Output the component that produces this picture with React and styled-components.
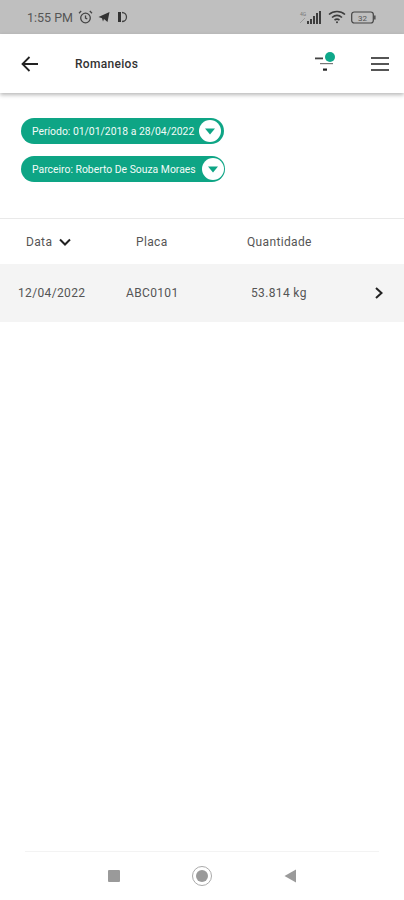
import React from 'react';
import styled, { createGlobalStyle } from 'styled-components';

const GlobalStyle = createGlobalStyle`
  html, body {
    margin: 0;
    padding: 0;
    background: #fff;
    font-family: Roboto, "Liberation Sans", sans-serif;
  }
`;

const Page = styled.div`
  width: 404px;
  height: 900px;
  display: flex;
  flex-direction: column;
  background: #fff;
  overflow: hidden;
`;

const StatusBar = styled.div`
  height: 34px;
  flex: none;
  background: #bfbfbf;
  display: flex;
  align-items: center;
  justify-content: space-between;
  padding: 0 27px 0 27px;
  box-sizing: border-box;
  color: #4a4a4a;
`;

const StatusGroup = styled.div`
  display: flex;
  align-items: center;
  gap: ${(p) => p.$gap}px;
`;

const StatusTime = styled.span`
  font-size: 12.5px;
  color: #555;
`;

const MoonIcon = styled.svg`
  margin-left: 2px;
`;

const Header = styled.div`
  height: 59px;
  flex: none;
  background: #fff;
  display: flex;
  align-items: center;
  padding: 0 14px 0 20px;
  box-sizing: border-box;
  box-shadow: 0 2px 4px rgba(0, 0, 0, 0.28);
`;

const HeaderTitle = styled.div`
  margin-left: 35px;
  flex: 1;
  font-size: 12px;
  font-weight: 500;
  letter-spacing: 0.3px;
  color: #333;
`;

const FilterButton = styled.div`
  position: relative;
  width: 20px;
  height: 20px;
  margin-right: 35px;
`;

const Dot = styled.span`
  position: absolute;
  right: 0;
  top: -2px;
  width: 10px;
  height: 10px;
  border-radius: 50%;
  background: #0fa88a;
`;

const Filters = styled.div`
  display: flex;
  flex-direction: column;
  align-items: flex-start;
  gap: 12px;
  padding: 25px 0 0 21px;
  height: 126px;
  box-sizing: border-box;
  flex: none;
  border-bottom: 1px solid #e9e9e9;
`;

const Pill = styled.div`
  height: 26px;
  width: ${(p) => p.$width}px;
  box-sizing: border-box;
  border-radius: 13px;
  background: #0ea585;
  display: flex;
  align-items: center;
  justify-content: space-between;
  padding: 0 ${(p) => p.$pad}px 0 11px;
  color: #f2fbf8;
  font-size: 10.4px;
  white-space: nowrap;
`;

const PillArrow = styled.span`
  width: 22px;
  height: 22px;
  border-radius: 50%;
  background: #fff;
  display: flex;
  align-items: center;
  justify-content: center;
`;

const Columns = styled.div`
  display: grid;
  grid-template-columns: 110px 111px 1fr;
  height: 45px;
  align-items: center;
  flex: none;
  padding-left: 26px;
  font-size: 12px;
  letter-spacing: 0.35px;
  color: #555;
`;

const ColumnLabel = styled.div`
  display: flex;
  align-items: center;
  gap: 7px;
`;

const DataRow = styled.div`
  display: grid;
  grid-template-columns: 108px 125px 1fr 20px;
  height: 58px;
  align-items: center;
  flex: none;
  background: #f4f4f4;
  padding: 0 10px 0 18px;
  font-size: 12px;
  letter-spacing: 0.35px;
  color: #555;
`;

const Spacer = styled.div`
  flex: 1;
`;

const NavBar = styled.div`
  margin: 0 25px;
  height: 48px;
  flex: none;
  border-top: 1px solid #f3f3f3;
  display: flex;
  align-items: center;
  justify-content: space-between;
  padding: 0 83px;
`;

const NavSquare = styled.span`
  width: 12px;
  height: 12px;
  border-radius: 1px;
  background: #9a9a9a;
`;

const NavCircle = styled.span`
  width: 18px;
  height: 18px;
  border-radius: 50%;
  border: 1.5px solid #aaa;
  display: flex;
  align-items: center;
  justify-content: center;
  &::after {
    content: '';
    width: 12px;
    height: 12px;
    border-radius: 50%;
    background: #9a9a9a;
  }
`;

const Caret = () => (
  <svg width="12" height="8" viewBox="0 0 12 8">
    <path d="M1 1.5 L6 6.5 L11 1.5" fill="none" stroke="#222" strokeWidth="2" />
  </svg>
);

const PillCaret = () => (
  <svg width="12" height="7" viewBox="0 0 12 7">
    <path d="M1 0.5 H11 L6 6.5 Z" fill="#0ea585" />
  </svg>
);

const App = () => (
  <Page>
    <GlobalStyle />
    <StatusBar>
      <StatusGroup $gap={5}>
        <StatusTime>1:55 PM</StatusTime>
        <svg width="15" height="14" viewBox="0 0 15 14" fill="none" stroke="#444" strokeWidth="1.3">
          <circle cx="7.5" cy="8" r="4.8" />
          <path d="M7.5 5.5 V8 L9.3 9 M1 3.2 L3.2 1 M14 3.2 L11.8 1" />
        </svg>
        <svg width="12" height="10" viewBox="0 0 11 10">
          <path d="M0 5 L11 0 L9 10 L5.5 7 L4.5 9.5 L3.5 6.3 Z" fill="#333" />
        </svg>
        <MoonIcon width="12" height="12" viewBox="0 0 12 12">
          <path d="M1 1 H4 V11 H1 Z" fill="#333" />
          <path d="M5 1.5 A4.5 4.5 0 0 1 5 10.5" fill="none" stroke="#444" strokeWidth="1.3" />
        </MoonIcon>
      </StatusGroup>
      <StatusGroup $gap={5}>
        <svg width="24" height="15" viewBox="0 0 24 15">
          <text x="1" y="6" fontSize="5" fill="#777" fontFamily="Roboto, sans-serif">4G</text>
          <path d="M1 13 L6 8" stroke="#999" strokeWidth="1" />
          <path d="M8 11h2v3H8z M11 9h2v5h-2z M14 6h2v8h-2z M17 3h2v11h-2z M20 1h2v13h-2z" fill="#3d3d3d" />
        </svg>
        <svg width="18" height="14" viewBox="0 0 18 14" fill="none" stroke="#3d3d3d" strokeWidth="1.6">
          <path d="M1 4.5 C5.5 0.5 12.5 0.5 17 4.5" />
          <path d="M4 7.5 C7 5 11 5 14 7.5" />
          <path d="M6.5 10 C8 9 10 9 11.5 10" />
          <circle cx="9" cy="12.3" r="1" fill="#3d3d3d" stroke="none" />
        </svg>
        <svg width="26" height="13" viewBox="0 0 26 13" fill="none">
          <rect x="0.7" y="1" width="21.6" height="11" rx="2.5" stroke="#444" strokeWidth="1.2" />
          <rect x="23" y="4.5" width="1.6" height="4" fill="#555" />
          <text x="11.5" y="9.5" textAnchor="middle" fontSize="8" fill="#555" fontFamily="Roboto, sans-serif">32</text>
        </svg>
      </StatusGroup>
    </StatusBar>
    <Header>
      <svg width="20" height="18" viewBox="0 0 20 18" fill="none" stroke="#222" strokeWidth="1.8">
        <path d="M18 9 H3 M9.5 2 L2.5 9 L9.5 16" />
      </svg>
      <HeaderTitle>Romaneios</HeaderTitle>
      <FilterButton>
        <svg width="20" height="20" viewBox="0 0 20 20">
          <rect x="0" y="3.5" width="8" height="1.8" fill="#444" />
          <rect x="5" y="9" width="13" height="1.2" fill="#777" />
          <rect x="8" y="14.5" width="4" height="2.2" fill="#222" />
        </svg>
        <Dot />
      </FilterButton>
      <svg width="20" height="16" viewBox="0 0 20 16" fill="#555">
        <rect x="1" y="1" width="18" height="2" />
        <rect x="1" y="7" width="18" height="2" />
        <rect x="1" y="13" width="18" height="2" />
      </svg>
    </Header>
    <Filters>
      <Pill $width={203} $pad={3}>
        Período: 01/01/2018 a 28/04/2022
        <PillArrow>
          <PillCaret />
        </PillArrow>
      </Pill>
      <Pill $width={204} $pad={1}>
        Parceiro: Roberto De Souza Moraes
        <PillArrow>
          <PillCaret />
        </PillArrow>
      </Pill>
    </Filters>
    <Columns>
      <ColumnLabel>
        Data
        <Caret />
      </ColumnLabel>
      <div>Placa</div>
      <div>Quantidade</div>
    </Columns>
    <DataRow>
      <div>12/04/2022</div>
      <div>ABC0101</div>
      <div>53.814 kg</div>
      <svg width="10" height="14" viewBox="0 0 10 14" fill="none" stroke="#222" strokeWidth="2">
        <path d="M2 2 L7.5 7 L2 12" />
      </svg>
    </DataRow>
    <Spacer />
    <NavBar>
      <NavSquare />
      <NavCircle />
      <svg width="12" height="14" viewBox="0 0 12 14">
        <path d="M12 0.5 V13.5 L0.5 7 Z" fill="#9a9a9a" />
      </svg>
    </NavBar>
  </Page>
);

export default App;
